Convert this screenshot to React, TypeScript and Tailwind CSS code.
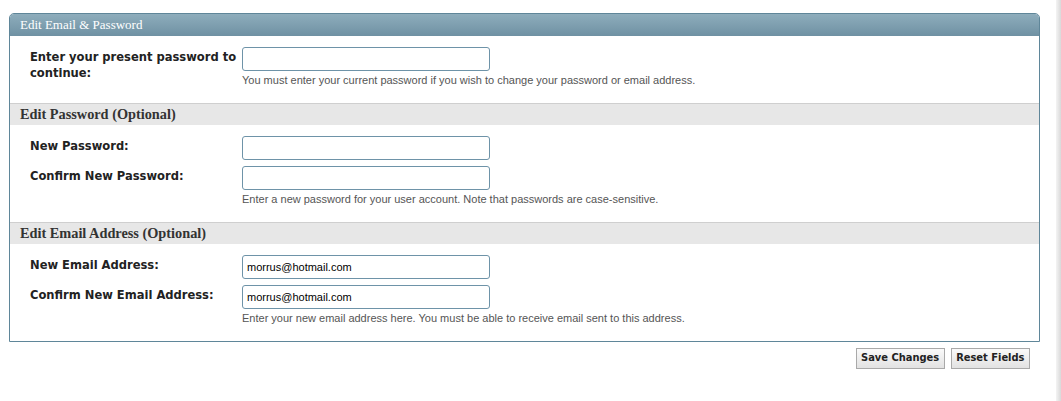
import React from "react";

const labelFont = { fontFamily: '"DejaVu Sans Condensed", "DejaVu Sans", sans-serif' };

function Field({ label, value, help }: { label: string; value?: string; help?: string }) {
  return (
    <div className="flex">
      <div className="w-[232px] pl-[20px] pr-[4px] pt-[2px] text-[12.8px] leading-[16px] font-bold text-[#222]" style={labelFont}>
        {label}
      </div>
      <div className="flex flex-col">
        <input
          type="text"
          defaultValue={value}
          className="w-[248px] h-[24px] border border-[#6e93a8] rounded-[3px] bg-white px-[4px] text-[11px] text-black outline-none font-['Liberation_Sans',sans-serif]"
        />
        {help && (
          <div className="mt-[3px] text-[11px] leading-[13px] text-[#555] font-['Liberation_Sans',sans-serif]">{help}</div>
        )}
      </div>
    </div>
  );
}

function SectionHead({ title }: { title: string }) {
  return (
    <div className="h-[22px] border-t border-[#cfcfcf] bg-[#e7e7e7] pl-[10px] flex items-center text-[14.3px] font-bold text-[#333] font-['Liberation_Serif',serif]">
      {title}
    </div>
  );
}

export default function App() {
  return (
    <div className="flex w-[1061px] h-[401px] bg-white">
      <div className="flex-1 pl-[9px] pt-[13px] pr-[16px]">
        <div className="border border-[#5f8699] rounded-t-[5px] bg-white">
          <div className="h-[22px] rounded-t-[4px] bg-gradient-to-b from-[#8eadbc] to-[#6f91a3] pl-[10px] flex items-center text-[13px] text-white font-['Liberation_Serif',serif]">
            Edit Email &amp; Password
          </div>
          <div className="pt-[11px] h-[67px]">
            <Field
              label="Enter your present password to continue:"
              help="You must enter your current password if you wish to change your password or email address."
            />
          </div>
          <SectionHead title="Edit Password (Optional)" />
          <div className="pt-[11px] h-[97px] flex flex-col gap-[6px]">
            <Field label="New Password:" />
            <Field
              label="Confirm New Password:"
              help="Enter a new password for your user account. Note that passwords are case-sensitive."
            />
          </div>
          <SectionHead title="Edit Email Address (Optional)" />
          <div className="pt-[11px] h-[97px] flex flex-col gap-[6px]">
            <Field label="New Email Address:" value="morrus@hotmail.com" />
            <Field
              label="Confirm New Email Address:"
              value="morrus@hotmail.com"
              help="Enter your new email address here. You must be able to receive email sent to this address."
            />
          </div>
        </div>
        <div className="flex justify-end gap-[6px] mt-[6px] pr-[10px]">
          <button className="h-[21px] px-[4.5px] border border-[#a9a9a9] bg-gradient-to-b from-[#fafafa] to-[#e2e2e2] text-[11px] font-bold text-[#222]" style={labelFont}>
            Save Changes
          </button>
          <button className="h-[21px] px-[4.5px] border border-[#a9a9a9] bg-gradient-to-b from-[#fafafa] to-[#e2e2e2] text-[11px] font-bold text-[#222]" style={labelFont}>
            Reset Fields
          </button>
        </div>
      </div>
      <div className="w-[5px] h-full bg-gradient-to-r from-[#f4f4f4] to-[#d9d9d9]" />
    </div>
  );
}
